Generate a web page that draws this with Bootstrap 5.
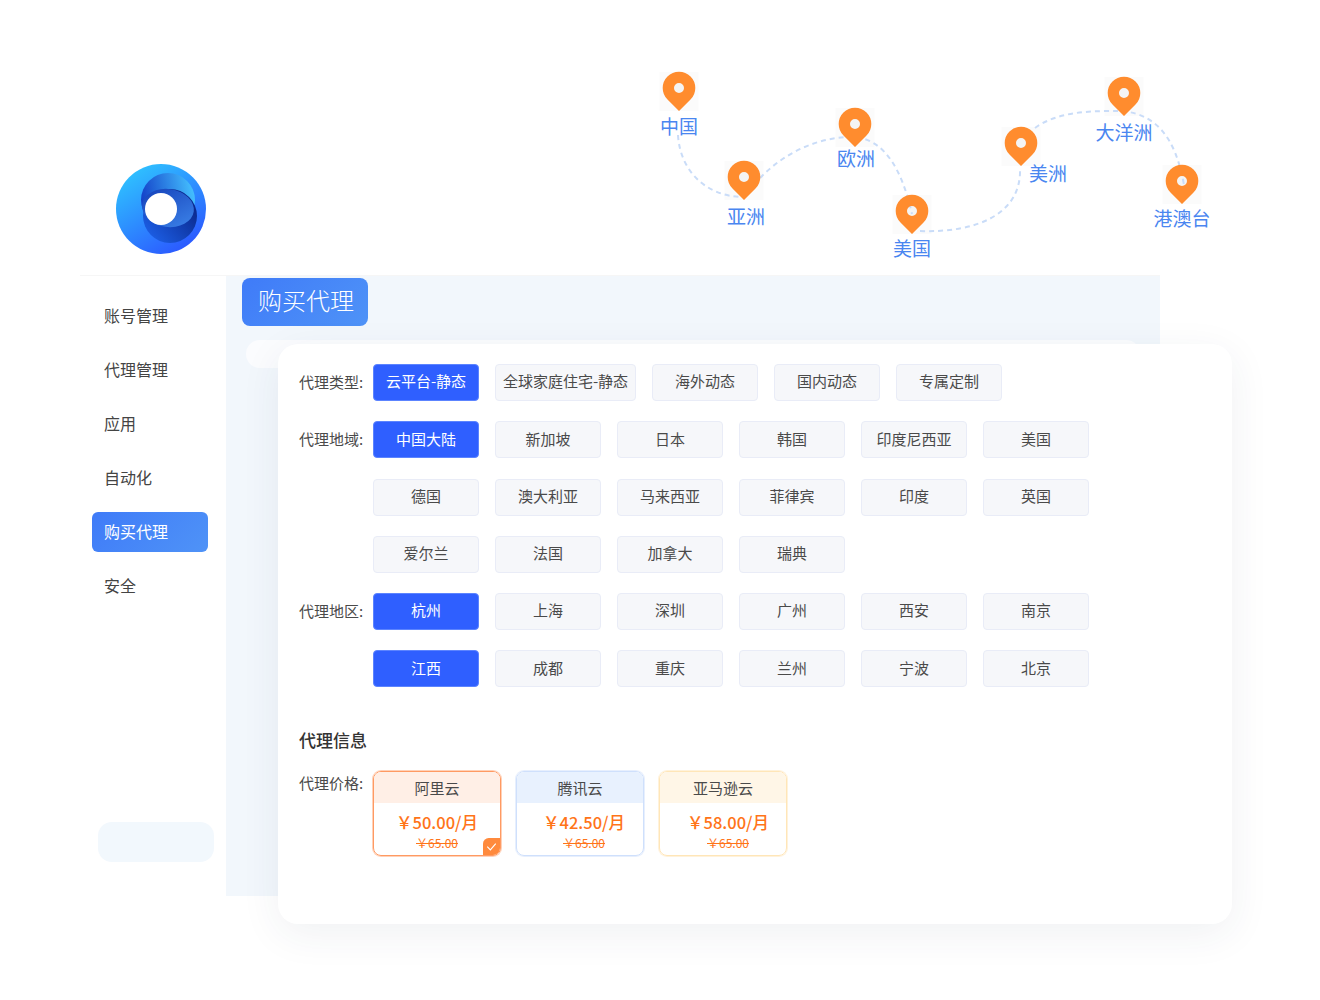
<!DOCTYPE html>
<html lang="zh-CN">
<head>
  <meta charset="UTF-8" />
  <meta name="viewport" content="width=device-width, initial-scale=1.0" />
  <title>购买代理</title>
  <link href="https://cdn.jsdelivr.net/npm/bootstrap@5.3.3/dist/css/bootstrap.min.css" rel="stylesheet" />
  <style>
    body {
      background-color: #fff;
      color: #4a4a4a;
      font-family: "Noto Sans CJK SC", "Noto Sans", sans-serif;
      font-size: 15px;
    }

    .stage {
      position: relative;
      width: 1320px;
      height: 1000px;
      overflow: hidden;
    }

    .route-map {
      position: absolute;
      left: 0;
      top: 0;
    }

    .route-map text {
      fill: #4a86f0;
      font-size: 19px;
      text-anchor: middle;
    }

    .route-line {
      fill: none;
      stroke: #c9dcf8;
      stroke-width: 2;
      stroke-dasharray: 5 4;
    }

    .brand-logo {
      position: absolute;
      left: 116px;
      top: 164px;
    }

    .app-frame {
      position: absolute;
      left: 80px;
      top: 275px;
      width: 1080px;
      height: 621px;
      border-top: 1px solid #f6f6f6;
    }

    .side-menu {
      width: 146px;
      padding: 20px 18px 0 12px;
    }

    .side-link {
      display: block;
      height: 40px;
      line-height: 38px;
      margin-bottom: 14px;
      padding-left: 12px;
      border-radius: 6px;
      color: #444;
      font-size: 16px;
      text-decoration: none;
    }

    .side-link.is-active {
      background: linear-gradient(135deg, #3f7bf8, #4f93f7);
      color: #fff;
    }

    .side-stub {
      width: 116px;
      height: 40px;
      margin: 216px 0 0 6px;
      background-color: #f2f8fd;
      border-radius: 14px;
    }

    .main-area {
      background-color: #f2f7fc;
      padding: 2px 20px 0 16px;
    }

    .page-title {
      display: inline-block;
      height: 48px;
      line-height: 44px;
      padding: 0 14px 0 16px;
      background: linear-gradient(135deg, #3f7bf8, #4f93f7);
      border-radius: 8px;
      color: #fff;
      font-size: 24px;
      font-weight: 300;
    }

    .title-stub {
      height: 28px;
      margin: 14px 0 0 4px;
      background-color: #fbfcfe;
      border-radius: 14px;
    }

    .buy-panel {
      position: absolute;
      left: 278px;
      top: 344px;
      width: 954px;
      height: 580px;
      padding: 20px 21px;
      background-color: #fff;
      border-radius: 20px;
      box-shadow: 0 10px 40px rgba(40, 60, 90, .07);
    }

    .opt-row {
      display: flex;
      height: 37px;
      margin-bottom: 20.3px;
    }

    .opt-label {
      flex: 0 0 74px;
      line-height: 35px;
      white-space: nowrap;
    }

    .opt-btns {
      display: flex;
      gap: 16px;
    }

    .opt-btn {
      width: 106px;
      height: 37px;
      padding: 0 0 2px;
      background-color: #f6f7fa;
      border: 1px solid #e9ecf7;
      border-radius: 4px;
      color: #4a4a4a;
      font-size: 15px;
    }

    .opt-btn.opt-wide {
      width: 141px;
    }

    .opt-btn.is-on {
      background-color: #2f5fff;
      border-color: #5c84ff;
      color: #fff;
    }

    .info-title {
      margin: 40px 0 18px;
      color: #333;
      font-size: 17px;
      font-weight: 500;
    }

    .price-row {
      display: flex;
    }

    .price-row .opt-label {
      line-height: 24px;
    }

    .price-opts {
      display: flex;
      gap: 15px;
    }

    .price-box {
      position: relative;
      width: 128px;
      height: 85px;
      border-radius: 8px;
      text-align: center;
      overflow: hidden;
    }

    .price-head {
      height: 31px;
      line-height: 31px;
      font-size: 15px;
      color: #4a4a4a;
    }

    .price-now {
      margin-top: 6px;
      line-height: 26px;
      color: #ff7418;
      font-size: 16.5px;
      font-weight: 500;
    }

    .price-old {
      line-height: 16px;
      color: #ff7418;
      font-size: 12px;
      text-decoration: line-through;
    }

    .box-ali { border: 1px solid #ff9a62; box-shadow: 0 0 0 1px rgba(255, 154, 98, .45); }
    .box-ali .price-head { background-color: #ffefe6; }
    .box-ten { border: 1px solid #cfe0fc; box-shadow: 0 0 0 1px rgba(207, 224, 252, .5); }
    .box-ten .price-head { background-color: #e8f1fe; }
    .box-ten .price-now, .box-ten .price-old { padding-left: 8px; }
    .box-aws { border: 1px solid #ffe6b8; box-shadow: 0 0 0 1px rgba(255, 230, 184, .5); }
    .box-aws .price-head { background-color: #fff6e7; }
    .box-aws .price-now, .box-aws .price-old { padding-left: 10px; }

    .check-tag {
      position: absolute;
      right: 0;
      bottom: 0;
      display: block;
    }
  </style>
</head>
<body>
  <div class="stage">

    <svg class="brand-logo" width="90" height="90" viewBox="0 0 90 90" aria-hidden="true">
      <defs>
        <linearGradient id="logoBase" x1="0.15" y1="0.05" x2="0.75" y2="1">
          <stop offset="0" stop-color="#2fc4ff" />
          <stop offset="1" stop-color="#2b55ff" />
        </linearGradient>
        <linearGradient id="logoTop" x1="0" y1="0.5" x2="1" y2="0.3">
          <stop offset="0" stop-color="#1340c8" />
          <stop offset="1" stop-color="#45c2ff" />
        </linearGradient>
        <linearGradient id="logoLow" x1="0.2" y1="0.9" x2="0.9" y2="0.3">
          <stop offset="0" stop-color="#1b5be0" />
          <stop offset="1" stop-color="#0b2a8f" />
        </linearGradient>
        <linearGradient id="logoMid" x1="0" y1="0" x2="1" y2="1">
          <stop offset="0" stop-color="#143fb8" />
          <stop offset="1" stop-color="#3d85ea" />
        </linearGradient>
      </defs>
      <circle cx="45" cy="45" r="45" fill="url(#logoBase)" />
      <circle cx="52" cy="36" r="27" fill="url(#logoTop)" />
      <circle cx="54" cy="52" r="27" fill="url(#logoLow)" />
      <ellipse cx="52" cy="44" rx="26" ry="19" fill="url(#logoMid)" transform="rotate(8 52 44)" />
      <circle cx="45" cy="45" r="16" fill="#fff" />
    </svg>

    <div class="app-frame d-flex">
      <nav class="side-menu flex-shrink-0">
        <a class="side-link" href="#">账号管理</a>
        <a class="side-link" href="#">代理管理</a>
        <a class="side-link" href="#">应用</a>
        <a class="side-link" href="#">自动化</a>
        <a class="side-link is-active" href="#">购买代理</a>
        <a class="side-link" href="#">安全</a>
        <div class="side-stub"></div>
      </nav>
      <main class="main-area flex-grow-1">
        <div class="page-title">购买代理</div>
        <div class="title-stub"></div>
      </main>
    </div>

    <section class="buy-panel">
      <div class="opt-row">
        <div class="opt-label">代理类型:</div>
        <div class="opt-btns">
          <button class="btn opt-btn is-on">云平台-静态</button>
          <button class="btn opt-btn opt-wide">全球家庭住宅-静态</button>
          <button class="btn opt-btn">海外动态</button>
          <button class="btn opt-btn">国内动态</button>
          <button class="btn opt-btn">专属定制</button>
        </div>
      </div>
      <div class="opt-row">
        <div class="opt-label">代理地域:</div>
        <div class="opt-btns">
          <button class="btn opt-btn is-on">中国大陆</button>
          <button class="btn opt-btn">新加坡</button>
          <button class="btn opt-btn">日本</button>
          <button class="btn opt-btn">韩国</button>
          <button class="btn opt-btn">印度尼西亚</button>
          <button class="btn opt-btn">美国</button>
        </div>
      </div>
      <div class="opt-row">
        <div class="opt-label"></div>
        <div class="opt-btns">
          <button class="btn opt-btn">德国</button>
          <button class="btn opt-btn">澳大利亚</button>
          <button class="btn opt-btn">马来西亚</button>
          <button class="btn opt-btn">菲律宾</button>
          <button class="btn opt-btn">印度</button>
          <button class="btn opt-btn">英国</button>
        </div>
      </div>
      <div class="opt-row">
        <div class="opt-label"></div>
        <div class="opt-btns">
          <button class="btn opt-btn">爱尔兰</button>
          <button class="btn opt-btn">法国</button>
          <button class="btn opt-btn">加拿大</button>
          <button class="btn opt-btn">瑞典</button>
        </div>
      </div>
      <div class="opt-row">
        <div class="opt-label">代理地区:</div>
        <div class="opt-btns">
          <button class="btn opt-btn is-on">杭州</button>
          <button class="btn opt-btn">上海</button>
          <button class="btn opt-btn">深圳</button>
          <button class="btn opt-btn">广州</button>
          <button class="btn opt-btn">西安</button>
          <button class="btn opt-btn">南京</button>
        </div>
      </div>
      <div class="opt-row">
        <div class="opt-label"></div>
        <div class="opt-btns">
          <button class="btn opt-btn is-on">江西</button>
          <button class="btn opt-btn">成都</button>
          <button class="btn opt-btn">重庆</button>
          <button class="btn opt-btn">兰州</button>
          <button class="btn opt-btn">宁波</button>
          <button class="btn opt-btn">北京</button>
        </div>
      </div>

      <div class="info-title">代理信息</div>

      <div class="price-row">
        <div class="opt-label">代理价格:</div>
        <div class="price-opts">
          <div class="price-box box-ali">
            <div class="price-head">阿里云</div>
            <div class="price-now">￥50.00/月</div>
            <div class="price-old">￥65.00</div>
            <svg class="check-tag" width="17" height="17" viewBox="0 0 18 18" aria-hidden="true">
              <path d="M6 0H18V18H0V6a6 6 0 0 1 6-6Z" fill="#ff8a3d" />
              <path d="M4.5 9.2 7.8 12.5 13.5 6" fill="none" stroke="#fff" stroke-width="1.2" />
            </svg>
          </div>
          <div class="price-box box-ten">
            <div class="price-head">腾讯云</div>
            <div class="price-now">￥42.50/月</div>
            <div class="price-old">￥65.00</div>
          </div>
          <div class="price-box box-aws">
            <div class="price-head">亚马逊云</div>
            <div class="price-now">￥58.00/月</div>
            <div class="price-old">￥65.00</div>
          </div>
        </div>
      </div>
    </section>

    <svg class="route-map" width="1320" height="270" viewBox="0 0 1320 270" aria-label="地区地图">
      <defs>
        <g id="pinBack">
          <rect x="-19.5" y="0" width="39" height="39" fill="#fbfbfb" />
          <circle cx="0" cy="16" r="5.5" fill="#f4f4f4" />
        </g>
        <path id="pinFront" fill="#ff8c2e" fill-rule="evenodd" d="M0 39 -11.5 27.5A16.3 16.3 0 1 1 11.5 27.5ZM5 16A5 5 0 1 0 -5 16 5 5 0 1 0 5 16Z" />
      </defs>

      <use href="#pinBack" x="679" y="72" />
      <use href="#pinBack" x="744" y="161" />
      <use href="#pinBack" x="855" y="108" />
      <use href="#pinBack" x="912" y="195" />
      <use href="#pinBack" x="1021" y="127" />
      <use href="#pinBack" x="1124" y="77" />
      <use href="#pinBack" x="1182" y="165" />

      <path class="route-line" d="M678 135C680 170 705 196 742 197" />
      <path class="route-line" d="M760 178C785 152 820 136 855 137C885 140 902 170 912 214" />
      <path class="route-line" d="M920 231C975 233 1022 215 1020 168" />
      <path class="route-line" d="M1035 128C1060 110 1095 111 1123 111C1155 115 1175 135 1184 185" />

      <use href="#pinFront" x="679" y="72" />
      <use href="#pinFront" x="744" y="161" />
      <use href="#pinFront" x="855" y="108" />
      <use href="#pinFront" x="912" y="195" />
      <use href="#pinFront" x="1021" y="127" />
      <use href="#pinFront" x="1124" y="77" />
      <use href="#pinFront" x="1182" y="165" />

      <text x="679" y="134">中国</text>
      <text x="746" y="224">亚洲</text>
      <text x="856" y="166">欧洲</text>
      <text x="912" y="256">美国</text>
      <text x="1048" y="181">美洲</text>
      <text x="1124" y="140">大洋洲</text>
      <text x="1182" y="226">港澳台</text>
    </svg>
  </div>

  <script src="https://cdn.jsdelivr.net/npm/bootstrap@5.3.3/dist/js/bootstrap.bundle.min.js"></script>
</body>
</html>
